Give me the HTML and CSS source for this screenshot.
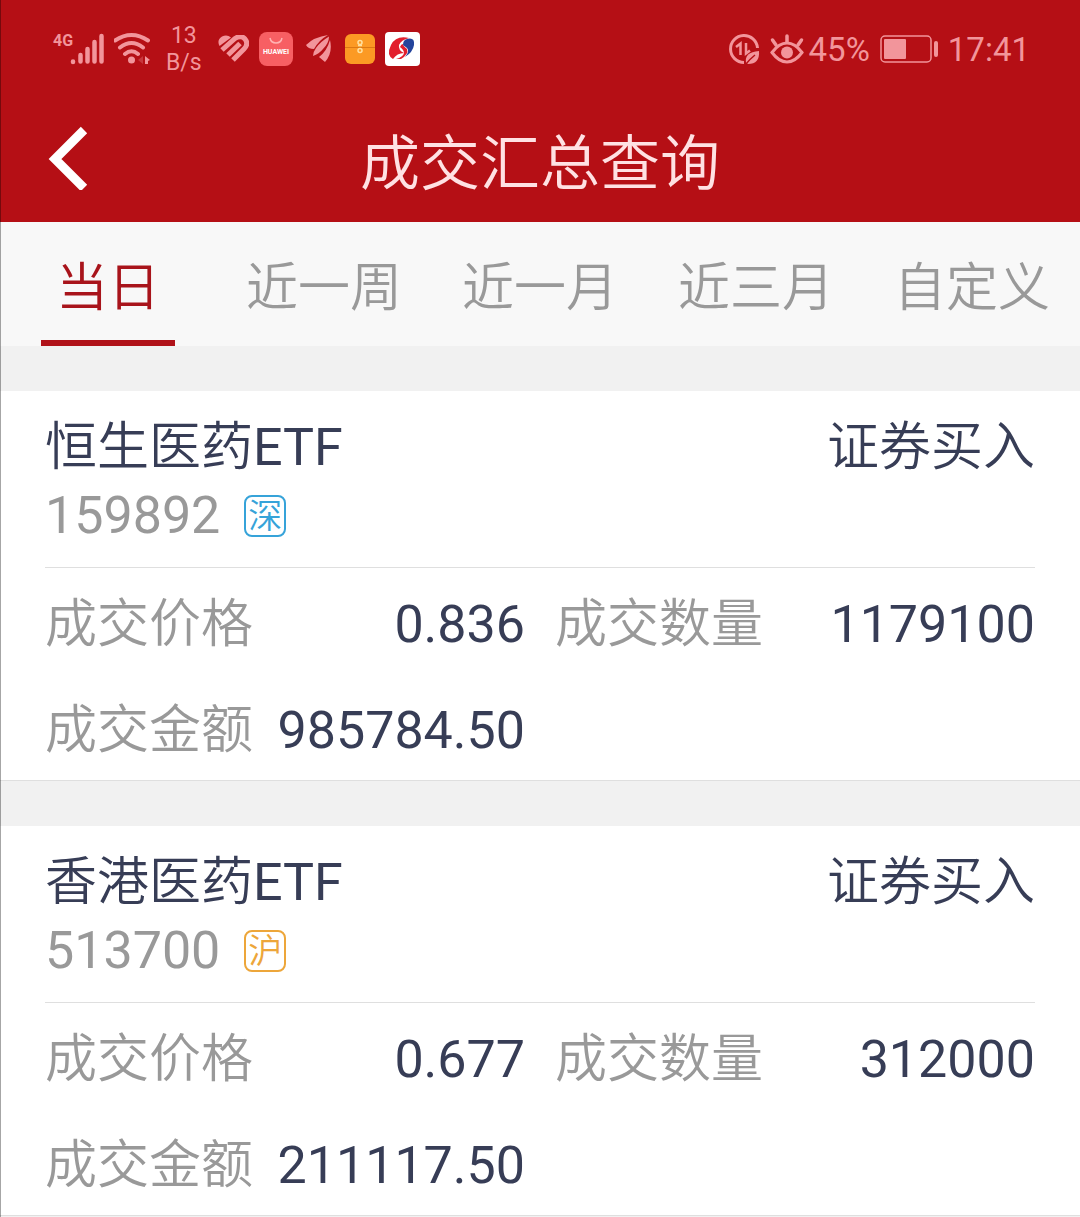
FILE: index.html
```html
<!DOCTYPE html>
<html lang="zh-CN">
<head>
    <meta charset="UTF-8">
    <meta name="viewport" content="width=device-width, initial-scale=1.0">
    <title>成交汇总查询</title>
    <link rel="stylesheet" href="styles.css">
</head>
<body>
    <header class="top">
        <div class="status-bar">
            <div class="status-left">
                <svg class="icon" width="51" height="36" viewBox="0 0 51 36" fill="none" stroke="currentColor">
                    <text class="network" x="0" y="15">4G</text>
                    <path d="M20 30.500V31M27.500 24V30.500M34.500 18V30.500M41.500 11V30.500M48.500 5V30.500" stroke-width="4.500" stroke-linecap="round"/>
                </svg>
                <svg class="icon" width="38" height="36" viewBox="2 0 38 36" fill="none" stroke="currentColor">
                    <path d="M3 9.500Q19.500 -1.500 36 9.500M8 16.500Q19.500 7.500 31 16.500M13 23Q19.500 17.500 26 23" stroke-width="4" stroke-linecap="round"/>
                    <circle cx="19.500" cy="29" r="3.500" fill="currentColor" stroke="none"/>
                    <path d="M31 25V33L26 29Z" fill="currentColor" stroke="none" opacity="0.3"/>
                    <path d="M33 25L38 29L36 30V33H33Z" fill="currentColor" stroke="none"/>
                </svg>
                <div class="net-speed">
                    <span>13</span>
                    <span>B/s</span>
                </div>
                <svg class="icon" width="31" height="28" viewBox="0 0 31 28" fill="none" stroke="currentColor">
                    <path d="M1.500 11Q-1.500 5 4 1.500Q9 -1 13 2.500Z" fill="currentColor" stroke="none"/>
                    <path d="M4 15L17 3.500Q23 -0.500 27 4Q31 9 26 14L15 25" stroke-width="5"/>
                    <path d="M10 20L22 8.500" stroke-width="5"/>
                </svg>
                <svg class="icon" width="34" height="34" viewBox="0 0 34 34">
                    <rect width="34" height="34" rx="8" fill="#f75f63"/>
                    <path d="M11 6Q12 11 17 11Q22 11 23 6" fill="none" stroke="#ffb3b3" stroke-width="1.500"/>
                    <text class="brand" x="17" y="22" text-anchor="middle">HUAWEI</text>
                </svg>
                <svg class="icon app-feather" width="26" height="30" viewBox="0 0 26 30" fill="currentColor">
                    <path d="M0 11Q8 3 22 1Q13 6 8 15Q2 15 0 11Z"/>
                    <path d="M23 2.500Q23 9 17 15Q13 20 7 22Q7 18 10 14Q14 8 23 2.500Z"/>
                    <path d="M24 6Q27 19 19 28L13 23Q21 17 24 6Z"/>
                </svg>
                <svg class="icon" width="30" height="30" viewBox="0 0 30 30" fill="none">
                    <rect width="30" height="30" rx="6" fill="#fc9a24"/>
                    <path d="M0 13.500H30" stroke="#dc7913"/>
                    <circle cx="15" cy="8.500" r="2" stroke="#ffe0a0" stroke-width="1.500"/>
                    <circle cx="15" cy="16.500" r="2" stroke="#ffe0a0" stroke-width="1.500"/>
                    <path d="M13 11.500H17" stroke="#ffe0a0" stroke-width="1.500"/>
                </svg>
                <svg class="icon" width="35" height="34" viewBox="0 0 35 34">
                    <rect width="35" height="34" rx="4" fill="#fff"/>
                    <path d="M24 6Q11 3 6 13Q1 23 8 27Q12 21 19 21Q13 18 14 13Q16 8 24 6Z" fill="#e21f2d"/>
                    <path d="M11 27Q18 25 19 21Q19 18 15 15Q16 12 18 12Q18 14 22 17Q24 22 16 27Z" fill="#e21f2d"/>
                    <path d="M22 7Q30 5 29 13Q28 20 20 25Q25 19 22 16L18 13Q18 8 22 7Z" fill="#24449c"/>
                </svg>
            </div>
            <div class="status-right">
                <svg class="icon" width="32" height="32" viewBox="0 0 32 32" fill="none" stroke="currentColor">
                    <path d="M16 29.500A13.500 13.500 0 1 1 29.500 15" stroke-width="3"/>
                    <path d="M8 14L12.500 10.500V22M18 10V20.500L22 17.500" stroke-width="2.500"/>
                    <path d="M18 30Q16 19 31 18Q32 31 20 31Z" fill="currentColor" stroke="none"/>
                    <path d="M18 31Q22 26 27 22" stroke="#b50f15" stroke-width="1.500"/>
                </svg>
                <svg class="icon" width="34" height="31" viewBox="0 0 34 31" fill="none" stroke="currentColor">
                    <path d="M2 18.500Q9 9 17 9Q25 9 32 18.500Q25 28 17 28Q9 28 2 18.500Z" stroke-width="3"/>
                    <circle cx="17" cy="18.500" r="6" fill="currentColor" stroke="none"/>
                    <path d="M17 8V2M6 11L2.500 6M28 11L31.500 6" stroke-width="3.500" stroke-linecap="round"/>
                </svg>
                <span class="battery-level">45%</span>
                <svg class="icon" width="58" height="28" viewBox="0 0 58 28" fill="none" stroke="currentColor">
                    <rect x="1" y="1" width="50" height="26" rx="4" stroke-width="1.500"/>
                    <rect x="4" y="4" width="22" height="20" rx="1" fill="currentColor" stroke="none"/>
                    <rect x="54" y="6" width="4" height="16" rx="2" fill="currentColor" stroke="none"/>
                </svg>
                <span>17:41</span>
            </div>
        </div>
        <div class="title-bar">
            <button class="back" type="button" aria-label="返回">
                <svg width="40" height="64" viewBox="0 0 40 64" fill="none" stroke="#fff" stroke-width="9">
                    <path d="M36 4L7 33L36 62"/>
                </svg>
            </button>
            <h1>成交汇总查询</h1>
        </div>
    </header>

    <nav class="tabs">
        <button class="tab active" type="button">当日</button>
        <button class="tab" type="button">近一周</button>
        <button class="tab" type="button">近一月</button>
        <button class="tab" type="button">近三月</button>
        <button class="tab" type="button">自定义</button>
    </nav>

    <main class="list">
        <article class="card">
            <div class="card-head">
                <div>
                    <h2>恒生医药<span class="latin">ETF</span></h2>
                    <p class="code">159892 <span class="market sz">深</span></p>
                </div>
                <span class="side">证券买入</span>
            </div>
            <dl class="details">
                <div class="row"><dt>成交价格</dt><dd>0.836</dd></div>
                <div class="row"><dt>成交数量</dt><dd>1179100</dd></div>
                <div class="row"><dt>成交金额</dt><dd>985784.50</dd></div>
            </dl>
        </article>
        <article class="card">
            <div class="card-head">
                <div>
                    <h2>香港医药<span class="latin">ETF</span></h2>
                    <p class="code">513700 <span class="market sh">沪</span></p>
                </div>
                <span class="side">证券买入</span>
            </div>
            <dl class="details">
                <div class="row"><dt>成交价格</dt><dd>0.677</dd></div>
                <div class="row"><dt>成交数量</dt><dd>312000</dd></div>
                <div class="row"><dt>成交金额</dt><dd>211117.50</dd></div>
            </dl>
        </article>
    </main>
</body>
</html>
```

FILE: styles.css
```css
* {
    box-sizing: border-box;
}
body {
    margin: 0;
    background: #f1f1f1;
    color: #373d56;
    font-family: Roboto, "Noto Sans CJK SC", sans-serif;
    font-size: 52px;
    font-weight: 350;
}
/* thin screen edge */
body::before {
    content: "";
    position: fixed;
    left: 0;
    top: 0;
    bottom: 0;
    width: 1px;
    background: rgba(0, 0, 0, 0.35);
    z-index: 1;
}
h1, h2, p, dl, dd {
    margin: 0;
    font-size: inherit;
    font-weight: inherit;
}
button {
    border: none;
    background: none;
    padding: 0;
    font: inherit;
    color: inherit;
    cursor: pointer;
}
.top {
    background: #b50f15;
}
.icon {
    display: block;
    flex: none;
}
.status-bar {
    display: flex;
    justify-content: space-between;
    height: 98px;
    padding: 0 50px 0 53px;
    color: #f2959b;
    font-size: 33px;
    font-weight: 400;
}
.status-left, .status-right {
    display: flex;
    align-items: center;
    gap: 10px;
}
.network {
    font-size: 16px;
    font-weight: 700;
    fill: currentColor;
    stroke: none;
}
.net-speed {
    display: flex;
    flex-direction: column;
    align-items: center;
    margin: 0 6px 0 4px;
    font-size: 23px;
    line-height: 27px;
}
.app-feather {
    margin: 0 3px;
}
.brand {
    font-size: 7px;
    font-weight: 700;
    fill: #fff;
}
.battery-level {
    margin-left: -5px;
}
.title-bar {
    display: grid;
    grid-template-columns: 1fr auto 1fr;
    align-items: center;
    height: 124px;
    padding: 0 48px 4px;
    color: #ffe1e3;
}
.back {
    justify-self: start;
}
.back svg {
    display: block;
}
.title-bar h1 {
    font-size: 60px;
}
.tabs {
    display: flex;
    height: 124px;
    background: #f8f8f8;
}
.tab {
    display: flex;
    flex: 1;
    flex-direction: column;
    align-items: center;
    padding-top: 16px;
    color: #999;
    line-height: 102px;
}
.tab.active {
    color: #a8141b;
}
.tab.active::after {
    content: "";
    width: 134px;
    height: 6px;
    background: #b01219;
}
.list {
    display: flex;
    flex-direction: column;
    gap: 45px;
    padding: 45px 0;
}
.card {
    padding: 0 45px;
    background: #fff;
    border-bottom: 1px solid #dfdfdf;
}
.card-head {
    display: flex;
    justify-content: space-between;
    padding: 22px 0 18px;
    border-bottom: 1px solid #dfdfdf;
    line-height: 70px;
}
.latin, .code, dd {
    font-weight: 400;
}
.code {
    display: flex;
    align-items: center;
    gap: 24px;
    color: #999;
    line-height: 66px;
}
.market {
    width: 42px;
    height: 42px;
    border: 2px solid;
    border-radius: 8px;
    font-size: 34px;
    font-weight: 350;
    line-height: 38px;
    text-align: center;
}
.sz {
    color: #36a3d9;
}
.sh {
    color: #eda63a;
}
.details {
    display: grid;
    grid-template-columns: 1fr 1fr;
    column-gap: 30px;
}
.row {
    display: flex;
    justify-content: space-between;
    padding-top: 8px;
    line-height: 98px;
}
dt {
    color: #999;
}
```
